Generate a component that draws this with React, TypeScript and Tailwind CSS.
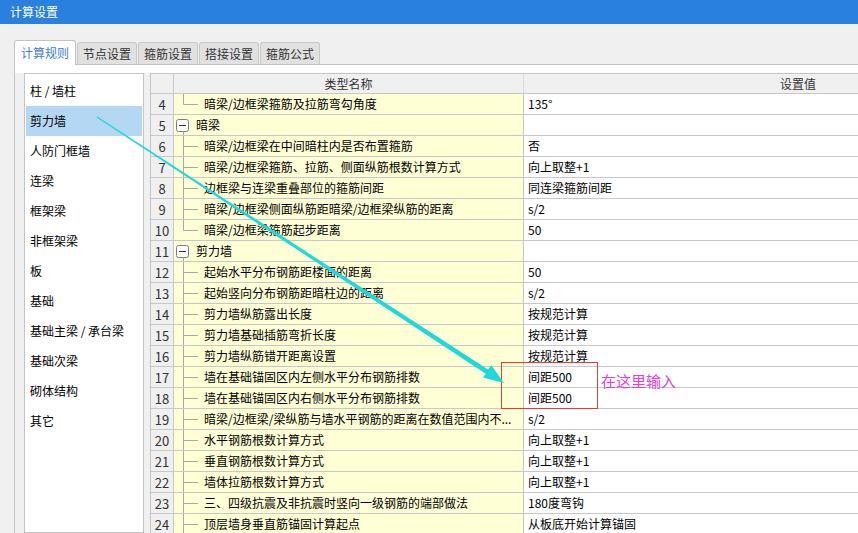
import React from "react";

type Row = { n: number; name: string; val?: string; t: "mid" | "last" | "group" };

const rows: Row[] = [
  { n: 4, name: "暗梁/边框梁箍筋及拉筋弯勾角度", val: "135°", t: "last" },
  { n: 5, name: "暗梁", t: "group" },
  { n: 6, name: "暗梁/边框梁在中间暗柱内是否布置箍筋", val: "否", t: "mid" },
  { n: 7, name: "暗梁/边框梁箍筋、拉筋、侧面纵筋根数计算方式", val: "向上取整+1", t: "mid" },
  { n: 8, name: "边框梁与连梁重叠部位的箍筋间距", val: "同连梁箍筋间距", t: "mid" },
  { n: 9, name: "暗梁/边框梁侧面纵筋距暗梁/边框梁纵筋的距离", val: "s/2", t: "mid" },
  { n: 10, name: "暗梁/边框梁箍筋起步距离", val: "50", t: "last" },
  { n: 11, name: "剪力墙", t: "group" },
  { n: 12, name: "起始水平分布钢筋距楼面的距离", val: "50", t: "mid" },
  { n: 13, name: "起始竖向分布钢筋距暗柱边的距离", val: "s/2", t: "mid" },
  { n: 14, name: "剪力墙纵筋露出长度", val: "按规范计算", t: "mid" },
  { n: 15, name: "剪力墙基础插筋弯折长度", val: "按规范计算", t: "mid" },
  { n: 16, name: "剪力墙纵筋错开距离设置", val: "按规范计算", t: "mid" },
  { n: 17, name: "墙在基础锚固区内左侧水平分布钢筋排数", val: "间距500", t: "mid" },
  { n: 18, name: "墙在基础锚固区内右侧水平分布钢筋排数", val: "间距500", t: "mid" },
  { n: 19, name: "暗梁/边框梁/梁纵筋与墙水平钢筋的距离在数值范围内不...", val: "s/2", t: "mid" },
  { n: 20, name: "水平钢筋根数计算方式", val: "向上取整+1", t: "mid" },
  { n: 21, name: "垂直钢筋根数计算方式", val: "向上取整+1", t: "mid" },
  { n: 22, name: "墙体拉筋根数计算方式", val: "向上取整+1", t: "mid" },
  { n: 23, name: "三、四级抗震及非抗震时竖向一级钢筋的端部做法", val: "180度弯钩", t: "mid" },
  { n: 24, name: "顶层墙身垂直筋锚固计算起点", val: "从板底开始计算锚固", t: "mid" },
];

const listItems = [
  "柱 / 墙柱",
  "剪力墙",
  "人防门框墙",
  "连梁",
  "框架梁",
  "非框架梁",
  "板",
  "基础",
  "基础主梁 / 承台梁",
  "基础次梁",
  "砌体结构",
  "其它",
];

const tabs = ["节点设置", "箍筋设置", "搭接设置", "箍筋公式"];

function Tree({ t }: { t: Row["t"] }) {
  if (t === "group") {
    return (
      <svg width="20" height="20" className="shrink-0 block">
        <rect x="2.5" y="4.5" width="12" height="12" rx="2" fill="#fff" stroke="#7c7c7c" />
        <line x1="5" y1="10.5" x2="12" y2="10.5" stroke="#333" />
        <line x1="9.5" y1="16.5" x2="9.5" y2="20" stroke="#a8a8a8" />
      </svg>
    );
  }
  return (
    <svg width="28" height="20" className="shrink-0 block">
      <line x1="9.5" y1="0" x2="9.5" y2={t === "last" ? 10.5 : 20} stroke="#a8a8a8" />
      <line x1="9.5" y1="10.5" x2="24" y2="10.5" stroke="#a8a8a8" />
    </svg>
  );
}

export default function App() {
  return (
    <div className="w-[858px] h-[533px] overflow-hidden relative bg-[#f0f0f0] flex flex-col font-['Noto_Sans_CJK_SC','Microsoft_YaHei',sans-serif] text-[12px] text-black">
      {/* title bar */}
      <div className="h-[24px] shrink-0 bg-[#2a80de] text-white text-[12px] pl-[10px] flex items-center leading-none">
        计算设置
      </div>

      {/* tabs */}
      <div className="h-[41px] shrink-0 flex items-end pl-[14px] gap-[1px]">
        <div className="relative z-10 h-[25px] w-[62px] bg-white border border-b-0 border-[#c4c4c4] rounded-t-[3px] flex items-center justify-center text-[#3b7dd8] leading-none pb-[1px]">
          计算规则
        </div>
        {tabs.map((t) => (
          <div
            key={t}
            className="h-[23px] w-[60px] bg-[#e1e1e1] border border-b-0 border-[#c8c8c8] rounded-t-[3px] flex items-center justify-center text-[#333] leading-none pb-[1px]"
          >
            {t}
          </div>
        ))}
      </div>

      {/* pane */}
      <div className="-mt-px ml-[14px] flex-1 min-h-0 border-l border-t border-[#c4c4c4] bg-white pt-[8px] flex flex-col">
        <div className="flex-1 min-h-0 bg-[#f0f0f0] pl-[9px] flex gap-[6px]">
          {/* left list */}
          <div className="w-[120px] shrink-0 bg-white border border-[#c4c4c4] pt-[2px] px-[1px] flex flex-col">
            {listItems.map((it, i) => (
              <div
                key={it}
                className={
                  "h-[30px] flex items-center pl-[4px] leading-none " +
                  (i === 1 ? "bg-[#b4d8f3]" : "")
                }
              >
                {it}
              </div>
            ))}
          </div>

          {/* table */}
          <div className="flex-1 min-w-0 overflow-hidden border-l border-t border-[#c4c4c4] bg-white">
            <div className="w-[922px]">
              {/* header */}
              <div className="h-[20px] flex border-b border-[#c8c8c8] bg-[#f0f0f0] text-[#333] leading-none">
                <div className="w-[23px] shrink-0 border-r border-[#c8c8c8]" />
                <div className="w-[350px] shrink-0 border-r border-[#dcdcdc] flex items-center justify-center">
                  类型名称
                </div>
                <div className="w-[548px] shrink-0 flex items-center justify-center">设置值</div>
              </div>
              {rows.map((r) => (
                <div key={r.n} className="h-[21px] flex border-b border-[#c8c8c8] leading-none">
                  <div className="w-[23px] shrink-0 border-r border-[#c8c8c8] bg-[#f0f0f0] flex items-center justify-center text-[13px] text-[#333]">
                    {r.n}
                  </div>
                  <div className="w-[350px] shrink-0 border-r border-[#c8c8c8] bg-[#ffffd6] flex items-center whitespace-nowrap overflow-hidden">
                    <Tree t={r.t} />
                    <span className="pl-[2px]">{r.name}</span>
                  </div>
                  <div className="w-[548px] shrink-0 flex items-center pl-[4px] whitespace-nowrap">
                    {r.val ?? ""}
                  </div>
                </div>
              ))}
            </div>
          </div>
        </div>
      </div>

      {/* annotations */}
      <div className="absolute left-[501px] top-[362px] w-[97px] h-[47px] border border-[#e53935]" />
      <div className="absolute left-[601px] top-[373px] text-[15px] leading-none text-[#e23ce2]">在这里输入</div>
      <svg className="absolute left-0 top-0 pointer-events-none" width="858" height="533">
        <polygon
          points="96.6,117.6 97.4,116.4 490.4,371.0 487.6,375.0"
          fill="#1fd8dc"
        />
        <polygon points="504,383 483.2,377.4 491.2,365.0" fill="#1fd8dc" />
      </svg>
    </div>
  );
}
